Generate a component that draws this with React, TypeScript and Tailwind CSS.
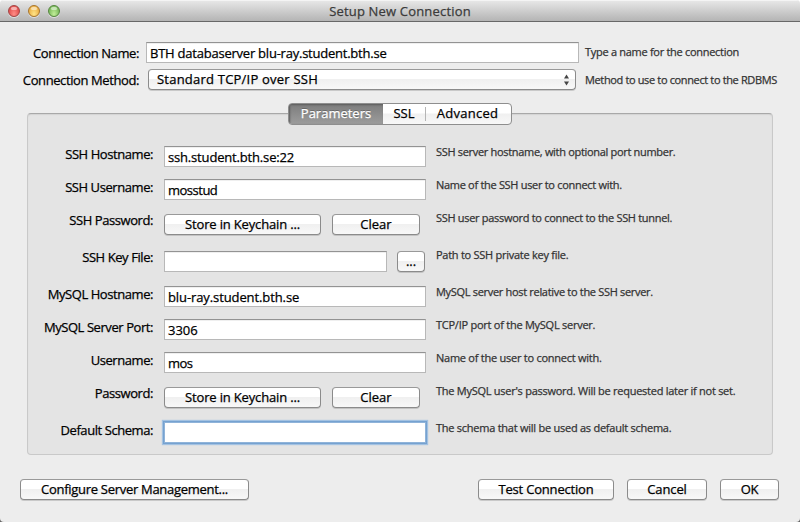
import type { ReactNode } from "react";

function Light({ color }: { color: string }) {
  return (
    <div className={`relative h-3 w-3 overflow-hidden rounded-full border shadow-[0_1px_0_rgba(255,255,255,0.5)] ${color}`}>
      <div className="mx-auto mt-px h-[3px] w-1.5 rounded-full bg-white/50" />
    </div>
  );
}

function Text({ className = "", children }: { className?: string; children: ReactNode }) {
  return <span className={`whitespace-nowrap ${className}`}>{children}</span>;
}

function Button({ className = "", text = "", children }: { className?: string; text?: string; children: ReactNode }) {
  return (
    <button
      className={`flex h-[21px] shrink-0 items-center justify-center rounded-[4px] border border-[#8b8b8b] border-t-[#999] bg-linear-to-b from-white from-45% via-[#f0f0f0] via-50% to-[#f8f8f8] pb-[2px] text-[13px] leading-[18px] shadow-[0_1px_0_rgba(120,120,120,0.3)] ${className}`}
    >
      <Text className={text}>{children}</Text>
    </button>
  );
}

function Field({ className = "", text = "", value = "" }: { className?: string; text?: string; value?: string }) {
  return (
    <div
      className={`flex h-[21px] shrink-0 items-center border border-[#b8b8b8] border-t-[#939393] bg-white pl-[3px] text-[13px] leading-[18px] shadow-[inset_0_1px_0_#efefef] ${className}`}
    >
      <Text className={text}>{value}</Text>
    </div>
  );
}

type RowProps = {
  height: string;
  label: string;
  hint: string;
  hintClass: string;
  offset?: string;
  children: ReactNode;
};

function Row({ height, label, hint, hintClass, offset = "pt-[3px]", children }: RowProps) {
  return (
    <div className={`flex ${height}`}>
      <div className="flex w-[127px] shrink-0 justify-end pt-[2px] pr-[2px] text-[13px] leading-[18px] tracking-[-0.43px]">
        <Text>{label}</Text>
      </div>
      <div className={`ml-[9px] flex w-[272px] shrink-0 items-start ${offset}`}>{children}</div>
      <div className="pt-px text-[11px] leading-4 text-[#333]">
        <Text className={hintClass}>{hint}</Text>
      </div>
    </div>
  );
}

export default function App() {
  return (
    <div className="h-[522px] w-[800px] overflow-hidden bg-linear-to-b from-white to-[#666] font-['Open_Sans','Noto_Sans',sans-serif] text-black [-webkit-text-stroke:0.25px]">
      <div className="flex h-full flex-col overflow-hidden rounded-[4px] bg-[#ededed]">
        <header className="flex h-[22px] shrink-0 items-center border-b border-[#686868] bg-linear-to-b from-[#e9e9e9] to-[#b4b4b4] pl-2 shadow-[inset_0_1px_0_#f4f4f4]">
          <div className="flex w-14 gap-2">
            <Light color="border-[#a34444] bg-radial-[at_50%_80%] from-[#ff8d86] to-[#d83c3c]" />
            <Light color="border-[#a8752c] bg-radial-[at_50%_80%] from-[#ffe487] to-[#e5a033]" />
            <Light color="border-[#55863f] bg-radial-[at_50%_80%] from-[#c1ee98] to-[#64a948]" />
          </div>
          <h1 className="flex w-[672px] justify-center pt-px text-[13px] leading-[18px] text-[#3b3b3b]">
            <Text className="tracking-[0.18px]">Setup New Connection</Text>
          </h1>
        </header>

        <section className="flex h-[81px] shrink-0 flex-col pt-5">
          <div className="flex h-[27px]">
            <div className="flex w-[139px] shrink-0 justify-end pt-[2px] text-[13px] leading-[18px] tracking-[-0.4px]">
              <Text>Connection Name:</Text>
            </div>
            <Field className="ml-[7px] w-[433px]" text="tracking-[-0.23px]" value="BTH databaserver blu-ray.student.bth.se" />
            <div className="ml-[6px] pt-[2px] text-[11px] leading-4 text-[#333]">
              <Text className="tracking-[-0.29px]">Type a name for the connection</Text>
            </div>
          </div>
          <div className="flex">
            <div className="flex w-[139px] shrink-0 justify-end pt-[2px] text-[13px] leading-[18px] tracking-[-0.4px]">
              <Text>Connection Method:</Text>
            </div>
            <Button className="ml-[9px] w-[428px] justify-start! pl-2" text="grow text-left tracking-[0.22px]">
              Standard TCP/IP over SSH
            </Button>
            <svg className="mt-[5px] -ml-[13px] mr-[5px] h-3 w-2 shrink-0" viewBox="0 0 8 12" fill="#444">
              <path d="M1 4.5 3.5 0.5 6 4.5ZM1 7.5H6L3.5 11.5Z" />
            </svg>
            <div className="ml-[9px] pt-[3px] text-[11px] leading-4 text-[#333]">
              <Text className="tracking-[-0.36px]">Method to use to connect to the RDBMS</Text>
            </div>
          </div>
        </section>

        <main className="mx-[27px] mt-[10px] h-[342px] w-[746px] shrink-0 rounded-[4px] border border-[#c9c9c9] border-t-[#a8a8a8] bg-[#e4e4e4] shadow-[inset_0_1px_1px_#d3d3d3]">
          <nav className="-mt-[11px] ml-[260px] flex h-[22px] w-[224px] overflow-hidden rounded-[4px] border border-[#8e8e8e] bg-linear-to-b from-white from-45% via-[#f0f0f0] via-50% to-[#f8f8f8] text-[13px] leading-[18px]">
            <div className="flex w-[94px] justify-center bg-linear-to-b from-[#7d7d7d] to-[#9c9c9c] text-white shadow-[inset_1px_1px_2px_#5c5c5c] [text-shadow:0_-1px_0_#666]">
              <Text>Parameters</Text>
            </div>
            <div className="flex w-[42px] justify-center">
              <Text>SSL</Text>
            </div>
            <div className="my-[3px] w-px bg-[#b5b5b5]" />
            <div className="flex grow justify-center pr-[2px]">
              <Text className="tracking-[0.25px]">Advanced</Text>
            </div>
          </nav>

          <div className="pt-[18px]">
            <Row height="h-[33px]" label="SSH Hostname:" hint="SSH server hostname, with optional port number." hintClass="tracking-[-0.31px]">
              <Field className="w-[262px]" text="tracking-[-0.17px]" value="ssh.student.bth.se:22" />
            </Row>
            <Row height="h-[33px]" label="SSH Username:" hint="Name of the SSH user to connect with." hintClass="tracking-[-0.3px]">
              <Field className="w-[262px]" text="tracking-[-0.5px]" value="mosstud" />
            </Row>
            <Row height="h-[37px]" offset="pt-[5px]" label="SSH Password:" hint="SSH user password to connect to the SSH tunnel." hintClass="tracking-[-0.3px]">
              <Button className="w-[157px]" text="tracking-[-0.16px]">Store in Keychain ...</Button>
              <Button className="ml-[11px] w-[88px]">Clear</Button>
            </Row>
            <Row height="h-[37px]" offset="pt-[5px]" label="SSH Key File:" hint="Path to SSH private key file." hintClass="tracking-[-0.26px]">
              <Field className="w-[223px]" />
              <Button className="ml-[10px] w-[28px]">...</Button>
            </Row>
            <Row height="h-[33px]" label="MySQL Hostname:" hint="MySQL server host relative to the SSH server." hintClass="tracking-[-0.31px]">
              <Field className="w-[262px]" text="tracking-[-0.1px]" value="blu-ray.student.bth.se" />
            </Row>
            <Row height="h-[33px]" label="MySQL Server Port:" hint="TCP/IP port of the MySQL server." hintClass="tracking-[-0.25px]">
              <Field className="w-[262px]" value="3306" />
            </Row>
            <Row height="h-[33px]" label="Username:" hint="Name of the user to connect with." hintClass="tracking-[-0.25px]">
              <Field className="w-[262px]" text="tracking-[-0.6px]" value="mos" />
            </Row>
            <Row height="h-[37px]" offset="pt-[5px]" label="Password:" hint="The MySQL user's password. Will be requested later if not set." hintClass="tracking-[-0.26px]">
              <Button className="w-[157px]" text="tracking-[-0.16px]">Store in Keychain ...</Button>
              <Button className="ml-[11px] w-[88px]">Clear</Button>
            </Row>
            <Row height="h-[33px]" label="Default Schema:" hint="The schema that will be used as default schema." hintClass="tracking-[-0.25px]">
              <Field className="w-[262px] border-[#8fb3d9]! shadow-[0_0_0_1px_#76a2d0,0_0_1px_2px_#a3c2e2]!" />
            </Row>
          </div>
        </main>

        <footer className="flex pt-6 pl-5">
          <Button className="w-[229px]" text="tracking-[-0.29px]">Configure Server Management...</Button>
          <Button className="ml-[229px] w-[136px]" text="tracking-[-0.2px]">Test Connection</Button>
          <Button className="ml-[13px] w-[80px]" text="tracking-[-0.1px]">Cancel</Button>
          <Button className="ml-[13px] w-[59px]" text="tracking-[-0.2px]">OK</Button>
        </footer>
      </div>
    </div>
  );
}
